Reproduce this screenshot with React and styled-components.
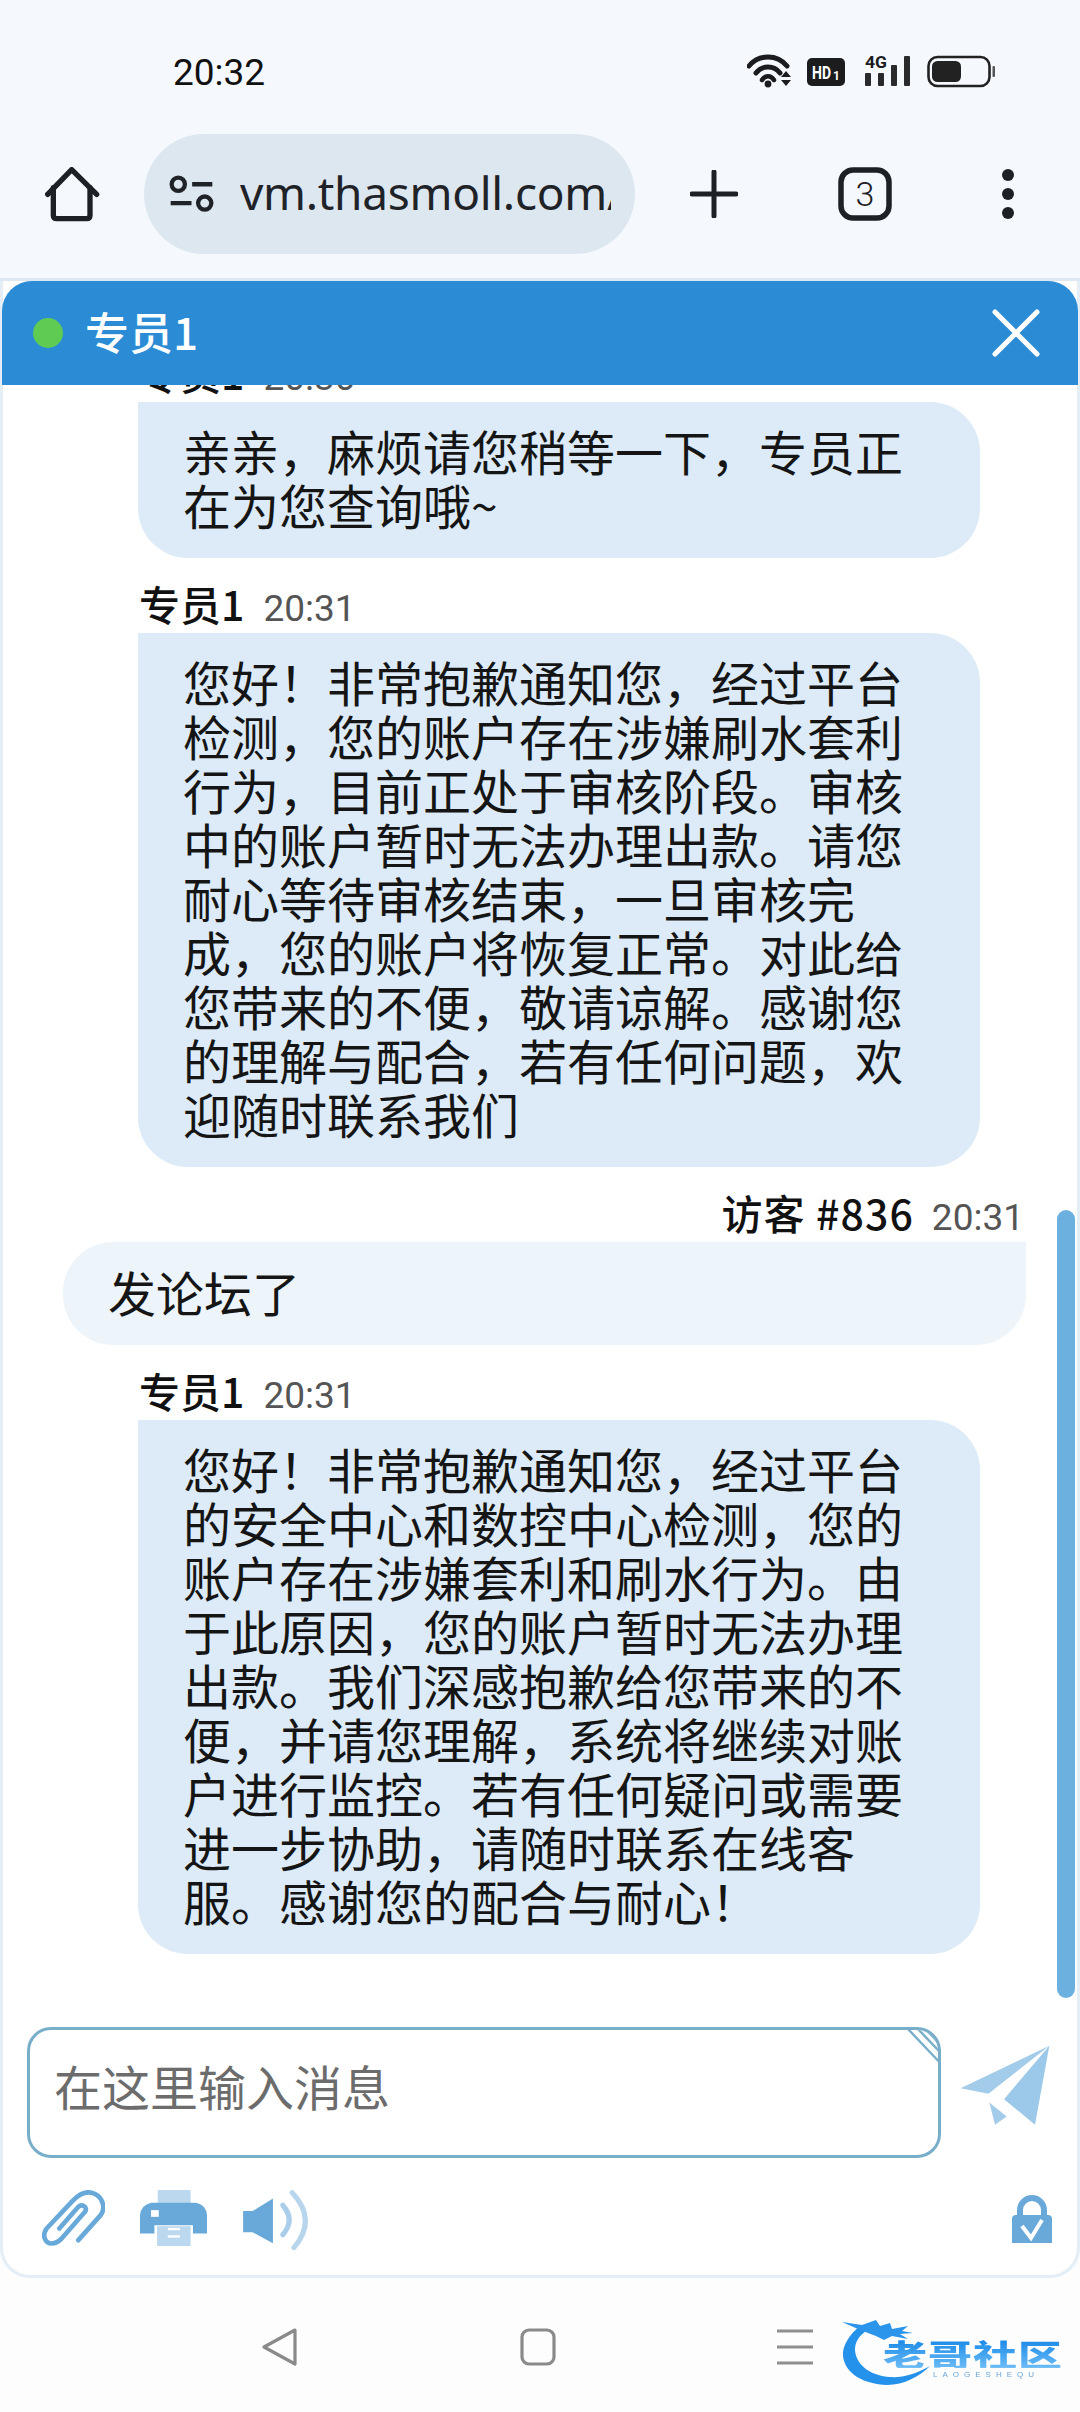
import React from "react";
import styled, { createGlobalStyle } from "styled-components";

const Global = createGlobalStyle`
  html, body { margin: 0; padding: 0; background: #fdfdfe; }
  * { box-sizing: border-box; }
`;
const CJK = `"Noto Sans CJK SC", "Noto Sans", sans-serif`;
const Phone = styled.div`
  width: 1080px; height: 2412px; display: flex; flex-direction: column; overflow: hidden;
  position: relative; background: #fdfdfe; font-family: ${CJK};
`;
const BrowserTop = styled.header`
  height: 281px; flex: none; background: #f5f9fe; border-bottom: 3px solid #dce9f3;
  display: flex; flex-direction: column;
`;
const StatusBar = styled.div`
  height: 134px; flex: none; padding: 53px 83px 0 173px; display: flex; justify-content: space-between; align-items: flex-start;
`;
const Clock = styled.span`
  font-family: Roboto, sans-serif; font-size: 37px; line-height: 40px; color: #111;
`;
const StatusIcons = styled.div`
  display: flex; align-items: flex-start; 
`;
const Toolbar = styled.div`
  display: flex; align-items: center; height: 120px; padding-left: 45px;
`;
const UrlPill = styled.div`
  width: 491px; height: 120px; margin-left: 44px; margin-right: 55px; border-radius: 60px; background: #dde7f0; display: flex; align-items: center;
  padding: 0 24px 0 24px; gap: 25px;
`;
const UrlText = styled.div`
  font-family: "Noto Sans", sans-serif; font-size: 46px; line-height: 56px; height: 58px; color: #1f2328; width: 372px; overflow: hidden; white-space: nowrap;
  letter-spacing: -.3px; margin-top: -2px;
`;
const TabGap = styled.div` width: ${p => p.$w}px; flex: none; `;
const Widget = styled.section`
  height: 1997px; flex: none; display: flex; flex-direction: column; border: 3px solid #e3eef6; border-top: 0; border-radius: 0 0 30px 30px; position: relative; background: #fff;
`;
const ChatHeader = styled.div`
  height: 104px; flex: none; margin: 0 -1px; background: #2b8cd5; border-radius: 30px 30px 0 0; display: flex; align-items: center; padding: 0 38px 0 31px;
  color: #fff;
`;
const Dot = styled.span` width: 30px; height: 30px; border-radius: 50%; background: #5fcb52; margin-right: 22px; `;
const Title = styled.div` font-size: 44px; line-height: 60px; height: 60px; flex: 1; font-weight: 500; margin-top: -4px; `;
const Messages = styled.div`
  height: 1616px; flex: none; overflow: hidden; display: flex; flex-direction: column; justify-content: flex-end;
  padding: 0 0 47px 0;
`;
const Meta = styled.div`
  display: flex; align-items: baseline; gap: ${p => p.$out ? 18 : 19}px; height: 46px; margin: 22px 0 7px; line-height: 46px; padding: ${p => p.$out ? "0 53px 0 0" : "0 0 0 136px"};
  justify-content: ${p => p.$out ? "flex-end" : "flex-start"};
`;
const Name = styled.span` font-size: 41px; font-weight: 500; color: #111; letter-spacing: ${p => p.$out ? 1.1 : 0}px; `;
const Time = styled.span` font-family: Roboto, sans-serif; font-size: 37px; color: #555; `;
const Bubble = styled.div`
  font-size: 48px; line-height: 54px; color: #151515; 
  ${p => p.$out ? `
    margin: 0 51px 0 60px; background: #eef5fa; border-radius: 50px 0 50px 50px; padding: 22px 44px 27px 45px;
  ` : `
    margin: 0 97px 0 135px; background: #dcebf7; border-radius: 0 50px 50px 50px; padding: 21px 47px 27px 45px;
  `}
`;
const Group = styled.div``;
const Scroll = styled.div`
  position: absolute; right: 2px; top: 929px; width: 18px; height: 788px; border-radius: 9px; background: #6cb0e0;
`;
const Composer = styled.div`
  display: flex; align-items: flex-start; padding: 26px 27px 0 24px; height: 189px; flex: none;
`;
const InputBox = styled.div`
  width: 914px; height: 131px; border: 3px solid #79aeca; border-radius: 24px; position: relative; overflow: hidden; padding: 27px 0 0 24px;
  font-size: 48px; line-height: 56px; color: #6c6c6c; flex: none;
`;
const Fold = styled.svg` position: absolute; top: -3px; right: -3px; `;
const SendIcon = styled.svg` margin: 18px 0 0 19px; flex: none; `;
const Tools = styled.div`
  display: flex; align-items: flex-start; padding: 0 24px 0 39px; height: 85px; flex: none; 
`;
const ToolIcon = styled.svg` flex: none; margin-right: ${p => p.$mr || 0}px; `;
const Spacer = styled.div` flex: 1; `;
const NavBar = styled.nav`
  flex: 1; display: flex; align-items: flex-start; padding: 50px 0 0 262px; position: relative; background: #fdfdfe;
`;
const Logo = styled.div`
  position: absolute; left: 842px; top: 42px; width: 224px; height: 68px; filter: blur(.6px);
`;
const LogoMark = styled.svg` position: absolute; left: 0; top: 0; `;
const LogoText = styled.div`
  position: absolute; left: 41px; top: 18px; font-family: "Noto Sans CJK SC", sans-serif; font-weight: 900; font-size: 44px; line-height: 44px; letter-spacing: 1px; white-space: nowrap;
  transform: scaleY(.68); transform-origin: left top;
  background: linear-gradient(180deg, #1586e6, #6cbcf6); -webkit-background-clip: text; background-clip: text; color: transparent;
`;
const LogoSub = styled.div`
  position: absolute; left: 91px; top: 50px; font-family: "Liberation Sans", sans-serif; font-size: 8px; line-height: 9px; letter-spacing: 5px; color: #6ba6d8; white-space: nowrap;
`;

const msgs = [
  { name: "专员1", time: "20:30", text: "亲亲，麻烦请您稍等一下，专员正在为您查询哦~" },
  { name: "专员1", time: "20:31", text: "您好！非常抱歉通知您，经过平台检测，您的账户存在涉嫌刷水套利行为，目前正处于审核阶段。审核中的账户暂时无法办理出款。请您耐心等待审核结束，一旦审核完成，您的账户将恢复正常。对此给您带来的不便，敬请谅解。感谢您的理解与配合，若有任何问题，欢迎随时联系我们" },
  { name: "访客 #836", time: "20:31", text: "发论坛了", out: true },
  { name: "专员1", time: "20:31", text: "您好！非常抱歉通知您，经过平台的安全中心和数控中心检测，您的账户存在涉嫌套利和刷水行为。由于此原因，您的账户暂时无法办理出款。我们深感抱歉给您带来的不便，并请您理解，系统将继续对账户进行监控。若有任何疑问或需要进一步协助，请随时联系在线客服。感谢您的配合与耐心！" },
];

export default function App() {
  return (
    <Phone>
      <Global />
      <BrowserTop>
        <StatusBar>
          <Clock>20:32</Clock>
          <StatusIcons>
            <svg width="250" height="36" viewBox="0 0 250 36">
              <g fill="none" stroke="#1c1c1e" strokeWidth="5" strokeLinecap="round">
                <path d="M2 13 C12 1 30 1 40 13" />
                <path d="M9 20 C15 12 27 12 33 20" />
                <path d="M15 27 C18 22 24 22 27 27" strokeWidth="4.5" />
              </g>
              <circle cx="21" cy="31" r="3.4" fill="#1c1c1e" />
              <path d="M34 24 l5-6 5 6z M34 27 h10 l-5 6z" fill="#1c1c1e" />
              <rect x="60" y="5" width="38" height="28" rx="5" fill="#1c1c1e" />
              <text x="65" y="26" fontFamily="Roboto, sans-serif" fontWeight="700" fontSize="19" fill="#fff" textLength="19" lengthAdjust="spacingAndGlyphs">HD</text>
              <text x="86" y="27" fontFamily="Roboto, sans-serif" fontWeight="700" fontSize="12" fill="#fff">1</text>
              <text x="118" y="15" fontFamily="Roboto, sans-serif" fontWeight="700" fontSize="17" fill="#1c1c1e" textLength="22" lengthAdjust="spacingAndGlyphs">4G</text>
              <rect x="118" y="20" width="6" height="13" rx="1" fill="#2a2a2c" />
              <rect x="131" y="20" width="6" height="13" rx="1" fill="#2a2a2c" />
              <rect x="144" y="12" width="6" height="21" rx="1" fill="#2a2a2c" />
              <rect x="157" y="3" width="6" height="30" rx="1" fill="#2a2a2c" />
              <rect x="181.5" y="4" width="61" height="29" rx="9" fill="none" stroke="#222" strokeWidth="2.6" />
              <rect x="185" y="8" width="29" height="21" rx="5.5" fill="#222" />
              <rect x="245.5" y="13" width="2.5" height="11" rx="1" fill="#555" />
            </svg>
          </StatusIcons>
        </StatusBar>
        <Toolbar>
          <svg width="55" height="55" viewBox="45 50 165 165" fill="none" stroke="#1d2025" strokeWidth="16" strokeLinecap="round" strokeLinejoin="round" style={{ flex: "none" }}>
            <path d="M53 132 L125 58 L200 132" />
            <path d="M70 112 V195 Q70 205 80 205 H170 Q180 205 180 195 V112" />
          </svg>
          <UrlPill>
            <svg width="47" height="38" viewBox="415 75 140 115" fill="none" stroke="#1f2328" strokeWidth="13" style={{ flex: "none" }}>
              <circle cx="445" cy="103" r="20" />
              <path d="M487 103 H548 M422 160 H485" />
              <circle cx="525" cy="160" r="20" />
            </svg>
            <UrlText>vm.thasmoll.com/</UrlText>
          </UrlPill>
          <svg width="48" height="48" viewBox="0 0 48 48" stroke="#1d2025" strokeWidth="5" strokeLinecap="round">
            <path d="M24 2 V46 M2 24 H46" />
          </svg>
          <TabGap $w={100} />
          <svg width="54" height="54" viewBox="0 0 54 54">
            <rect x="3" y="3" width="48" height="48" rx="12" fill="none" stroke="#1d2025" strokeWidth="5.5" />
            <text x="27" y="39" textAnchor="middle" fontFamily="Roboto, sans-serif" fontWeight="300" fontSize="34" fill="#1d2025">3</text>
          </svg>
          <TabGap $w={108} />
          <svg width="16" height="52" viewBox="0 0 16 52" fill="#1d2025">
            <circle cx="8" cy="7" r="6" /><circle cx="8" cy="26" r="6" /><circle cx="8" cy="45" r="6" />
          </svg>
        </Toolbar>
      </BrowserTop>
      <Widget>
        <ChatHeader>
          <Dot />
          <Title>专员1</Title>
          <svg width="48" height="48" viewBox="0 0 48 48" stroke="#fff" strokeWidth="5" strokeLinecap="round">
            <path d="M3 3 L45 45 M45 3 L3 45" />
          </svg>
        </ChatHeader>
        <Messages>
          {msgs.map((m, i) => (
            <Group key={i}>
              <Meta $out={m.out}><Name $out={m.out}>{m.name}</Name><Time>{m.time}</Time></Meta>
              <Bubble $out={m.out}>{m.text}</Bubble>
            </Group>
          ))}
        </Messages>
        <Scroll />
        <Composer>
          <InputBox>
            在这里输入消息
            <Fold width="36" height="36" viewBox="0 0 36 36" fill="none" stroke="#79aeca" strokeWidth="2.4">
              <path d="M2.7 1.7 L34.3 35 M12.7 1.7 L35 25 M21 2.7 L35 17" />
            </Fold>
          </InputBox>
          <SendIcon width="90" height="81" viewBox="240 76 270 242">
            <path d="M508 78 L242 205 L325 222 Z" fill="#a3cbea" />
            <path d="M508 78 L372 238 L465 315 Z" fill="#9cc8e9" />
            <path d="M328 248 L345 315 L380 290 Z" fill="#a3cbea" />
          </SendIcon>
        </Composer>
        <Tools>
          <ToolIcon $mr={35} width="63" height="56" viewBox="36 30 189 167" fill="none" stroke="#69a9da" strokeWidth="14" strokeLinecap="round" strokeLinejoin="round">
            <path d="M145 180 L212 105 C230 80 215 45 185 38 C165 32 145 45 130 60 L50 145 C35 165 45 190 65 190 C75 190 85 185 95 175 L165 95 C175 80 155 70 145 80 L88 145" />
          </ToolIcon>
          <ToolIcon $mr={36} width="67" height="56" viewBox="332 30 200 167">
            <rect x="385" y="30" width="98" height="40" fill="#bcd8ee" />
            <path d="M332 160 V105 Q335 75 365 68 H500 Q530 75 532 105 V160 H490 V135 H375 V160 Z" fill="#69a9da" />
            <rect x="365" y="90" width="23" height="20" fill="#fff" />
            <rect x="383" y="138" width="100" height="59" fill="#bcd8ee" />
            <rect x="415" y="143" width="36" height="7" fill="#fff" />
            <rect x="415" y="165" width="36" height="7" fill="#fff" />
          </ToolIcon>
          <ToolIcon width="68" height="60" viewBox="640 30 200 177">
            <path d="M640 92 H668 L728 55 V187 L668 155 H640 Z" fill="#69a9da" />
            <path d="M757 75 Q795 118 757 162" fill="none" stroke="#a9cdea" strokeWidth="15" strokeLinecap="round" />
            <path d="M785 38 Q860 118 790 200" fill="none" stroke="#b7d5ec" strokeWidth="15" strokeLinecap="round" />
          </ToolIcon>
          <Spacer />
          <ToolIcon width="42" height="60" viewBox="0 0 42 60" style={{ marginTop: 5 }}>
            <path d="M9 23 V15 A12 12 0 0 1 33 15 V23" fill="none" stroke="#69a9da" strokeWidth="6" />
            <path d="M5 20 H37 Q41 20 41 24 V48 H1 V24 Q1 20 5 20 Z" fill="#69a9da" />
            <path d="M11 31 L20 43 L31 25" fill="none" stroke="#fff" strokeWidth="4" />
          </ToolIcon>
        </Tools>
      </Widget>
      <NavBar>
        <svg width="36" height="38" viewBox="0 0 36 38" fill="none" stroke="#8a8a8a" strokeWidth="3.2" strokeLinejoin="round" style={{ flex: "none" }}>
          <path d="M33 2 L2 19 L33 36 Z" />
        </svg>
        <TabGap $w={222} />
        <svg width="36" height="38" viewBox="0 0 36 38" fill="none" stroke="#8a8a8a" strokeWidth="3.2" style={{ flex: "none" }}>
          <rect x="2" y="2" width="32" height="34" rx="7" />
        </svg>
        <TabGap $w={221} />
        <svg width="36" height="38" viewBox="0 0 36 38" fill="none" stroke="#8f8f8f" strokeWidth="3.2" style={{ flex: "none" }}>
          <path d="M0 3 H36 M0 19 H36 M0 35 H36" />
        </svg>
        <Logo>
          <LogoMark width="224" height="68" viewBox="0 0 224 68" fill="none">
            <path d="M20 5 C6 14 0 28 1 36 C3 54 22 64 45 65 C62 65 78 56 88 46 C74 54 60 58 48 57 C30 56 14 46 13 30 C13 22 17 16 24 11 Z" fill="#2491ea" />
            <path d="M0 2 L20 5 L34 0 L38 6 L48 3 L50 9 L66 6 L60 11 L71 13 L58 14 L66 19 L50 16 L42 20 L34 16 L26 13 L16 9 Z" fill="#2a95ea" />
          </LogoMark>
          <LogoText>老哥社区</LogoText>
          <LogoSub>LAOGESHEQU</LogoSub>
        </Logo>
      </NavBar>
    </Phone>
  );
}
